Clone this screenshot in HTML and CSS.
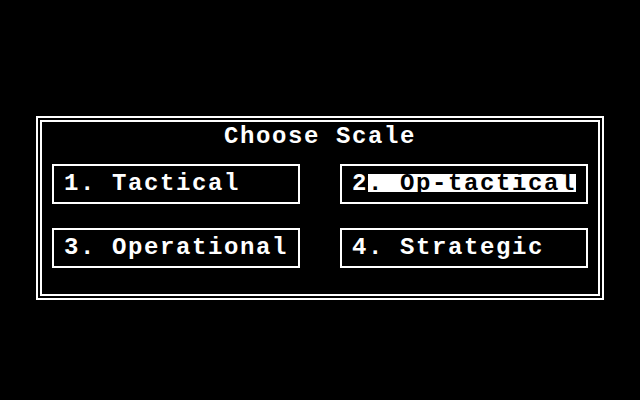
FILE: index.html
```html
<!doctype html>
<html lang="en">
<head>
  <meta charset="utf-8">
  <title>Choose Scale</title>
  <link rel="stylesheet" href="styles.css">
</head>
<body>
<main class="screen">
  <div class="frame">
    <div class="frame-inner">
      <h1 class="title">Choose Scale</h1>
      <ul class="choices">
        <li class="choice"><span class="label">1. Tactical</span></li>
        <li class="choice"><span class="label hot"><span class="cursor">2</span>. Op-tactical</span></li>
        <li class="choice"><span class="label">3. Operational</span></li>
        <li class="choice"><span class="label">4. Strategic</span></li>
      </ul>
    </div>
  </div>
</main>
</body>
</html>
```

FILE: styles.css
```css
:root{--bg:#000;--fg:#fff;--cell:16px;}
*{box-sizing:border-box;margin:0;padding:0;}
html,body{background:var(--bg);}
body{width:640px;height:400px;overflow:hidden;color:var(--fg);font-family:'Liberation Mono','DejaVu Sans Mono',monospace;font-weight:700;font-size:24px;line-height:var(--cell);letter-spacing:1.6px;}
.screen{padding:116px 36px 0;}
/* double rule around the dialog */
.frame{width:568px;height:184px;border:2px solid var(--fg);padding:2px;}
.frame-inner{height:100%;border:2px solid var(--fg);padding:7px 10px 0;}
.title{font-size:inherit;font-weight:inherit;text-align:center;height:var(--cell);margin-bottom:19px;}
.choices{list-style:none;display:grid;grid-template-columns:248px 248px;column-gap:40px;row-gap:24px;}
.choice{height:40px;border:2px solid var(--fg);padding:10px 10px;display:flex;align-items:flex-start;}
.label{display:inline-block;height:var(--cell);white-space:pre;}
/* selected entry is drawn in reverse video */
.label.hot{background:var(--fg);color:var(--bg);box-shadow:0 -2px 0 var(--fg);}
.cursor{background:var(--bg);color:var(--fg);box-shadow:0 -2px 0 var(--bg);}
```
